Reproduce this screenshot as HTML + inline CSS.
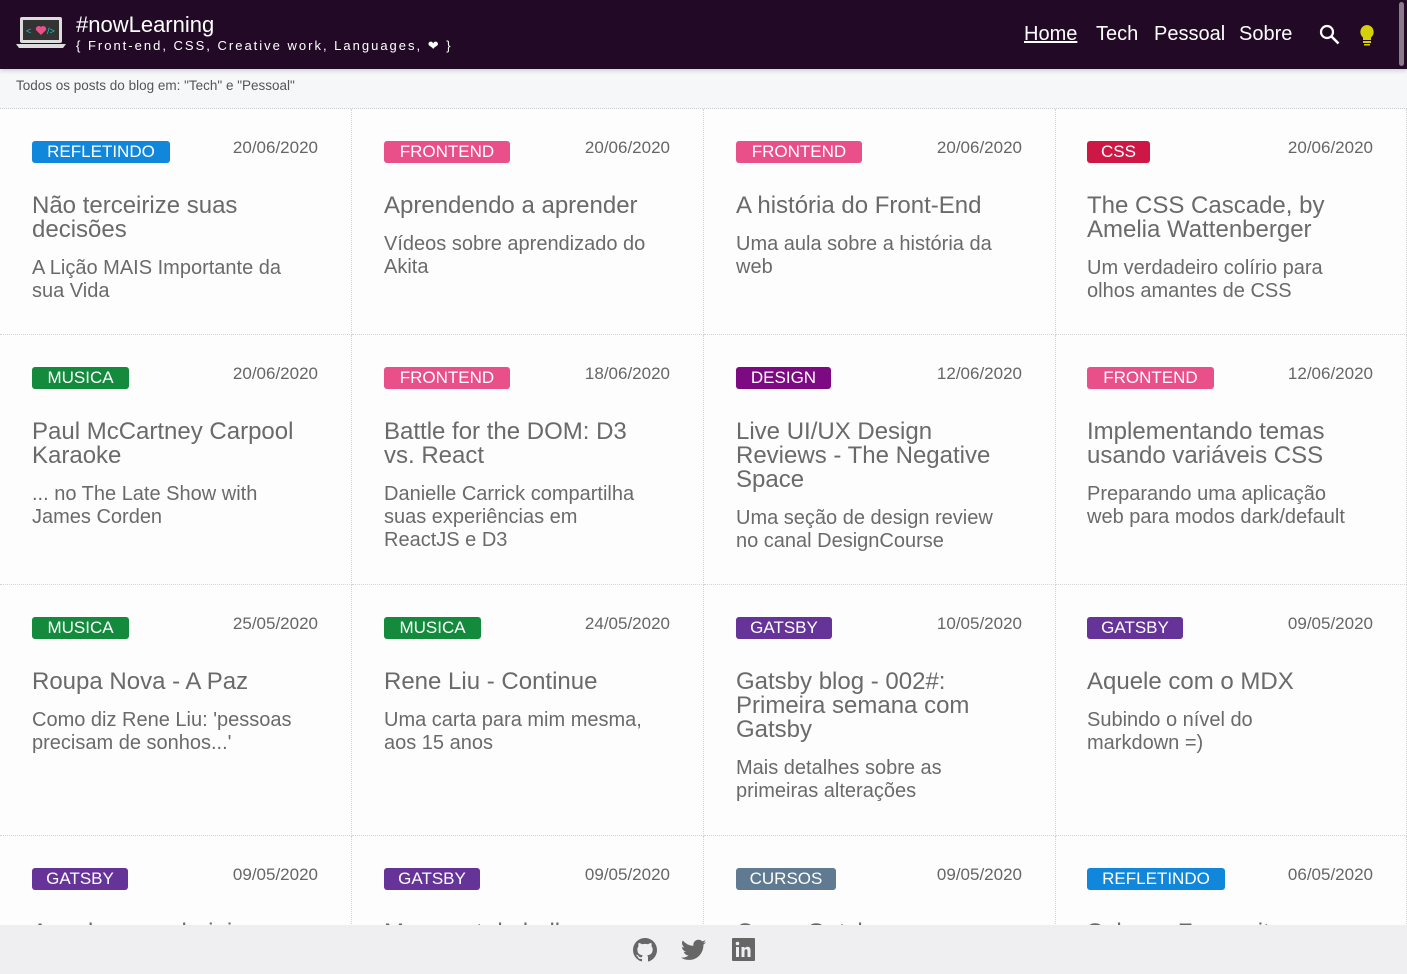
<!DOCTYPE html>
<html><head><meta charset="utf-8"><style>
*{box-sizing:border-box;margin:0;padding:0}
html,body{width:1407px;height:974px;overflow:hidden}
body{background:#fdfdfe;font-family:"Liberation Sans",sans-serif;color:#676767;position:relative}
.hdr{position:absolute;left:0;top:0;width:1407px;height:69px;background:#220a27;color:#fff;box-shadow:0 2px 4px rgba(0,0,0,.15);z-index:3}
.logo{position:absolute;left:16px;top:16px}
.t1{position:absolute;left:76px;top:12px;font-size:22px}
.t2{position:absolute;left:76px;top:38px;font-size:13px;letter-spacing:2px}
.nav{position:absolute;top:23px;font-size:20px}
.sub{position:absolute;left:0;top:69px;width:1407px;height:40px;background:#f6f7f9;border-bottom:1px dotted #ccc;font-size:13.5px;color:#555;padding:9px 16px}
.card{position:absolute;width:352px;border-right:1px dotted #d3d3d3;border-bottom:1px dotted #d3d3d3;padding:0 32px}
.tag{position:absolute;left:32px;top:32px;height:22px;border-radius:3px;color:#fff;font-size:17px;text-align:center;line-height:22px}
.date{position:absolute;right:33px;top:29px;font-size:17px;color:#666}
.ti{position:absolute;left:32px;top:85px;font-size:24px;line-height:24px;color:#6a6a6a;width:310px}
.ti p{margin-bottom:15px}
.ti span{display:block;font-size:20px;line-height:23px}
.ft{position:absolute;left:0;top:925px;width:1407px;height:49px;background:#efeff1;z-index:2}
.sb{position:absolute;left:1398px;top:0;width:9px;height:69px;z-index:4}
</style></head><body>
<div class="hdr">
<svg class="logo" width="50" height="34" viewBox="0 0 50 34"><rect x="4" y="1" width="42" height="26" rx="2" fill="#ddd"/><rect x="7" y="4" width="36" height="20" fill="#333"/><path d="M0 28h50l-3 4H3z" fill="#ddd"/><text x="10" y="18" font-size="9" fill="#2cb" font-family="Liberation Sans">&lt;</text><path d="M25 19l-5-5a3 3 0 0 1 5-3a3 3 0 0 1 5 3z" fill="#e9508a"/><text x="31" y="18" font-size="9" fill="#2cb" font-family="Liberation Sans">/&gt;</text></svg>
<div class="t1">#nowLearning</div>
<div class="t2">{ Front-end, CSS, Creative work, Languages, ❤ }</div>
<div class="nav" style="left:1024px;text-decoration:underline">Home</div>
<div class="nav" style="left:1096px">Tech</div>
<div class="nav" style="left:1154px">Pessoal</div>
<div class="nav" style="left:1239px">Sobre</div>
<svg style="position:absolute;left:1319px;top:24px" width="22" height="22" viewBox="0 0 22 22"><circle cx="8" cy="8" r="6" stroke="#fff" stroke-width="2.2" fill="none"/><path d="M12.5 12.5l7 7" stroke="#fff" stroke-width="2.6"/></svg>
<svg style="position:absolute;left:1358px;top:24px" width="18" height="22" viewBox="0 0 18 22"><path d="M9 1a7 7 0 0 0-4 12.5V16h8v-2.5A7 7 0 0 0 9 1z" fill="#d4d10a"/><rect x="5" y="17" width="8" height="2" fill="#d4d10a"/><rect x="6" y="20" width="6" height="1.5" fill="#d4d10a"/></svg>
</div>
<div class="sb"><div style="position:absolute;left:1px;top:2px;width:5px;height:64px;background:#8a7a8c;border-radius:3px"></div></div>
<div class="sub">Todos os posts do blog em: "Tech" e "Pessoal"</div>

<div class="card" style="left:0;top:109px;height:226px"><div class="tag" style="width:138px;background:#1187dc">REFLETINDO</div><div class="date">20/06/2020</div><div class="ti"><p>Não terceirize suas<br>decisões</p><span>A Lição MAIS Importante da<br>sua Vida</span></div></div>
<div class="card" style="left:352px;top:109px;height:226px"><div class="tag" style="width:126px;background:#e9508a">FRONTEND</div><div class="date">20/06/2020</div><div class="ti"><p>Aprendendo a aprender</p><span>Vídeos sobre aprendizado do<br>Akita</span></div></div>
<div class="card" style="left:704px;top:109px;height:226px"><div class="tag" style="width:126px;background:#e9508a">FRONTEND</div><div class="date">20/06/2020</div><div class="ti"><p>A história do Front-End</p><span>Uma aula sobre a história da<br>web</span></div></div>
<div class="card" style="left:1055px;top:109px;height:226px;width:352px"><div class="tag" style="width:63px;background:#cf1745">CSS</div><div class="date">20/06/2020</div><div class="ti"><p>The CSS Cascade, by<br>Amelia Wattenberger</p><span>Um verdadeiro colírio para<br>olhos amantes de CSS</span></div></div>

<div class="card" style="left:0;top:335px;height:250px"><div class="tag" style="width:97px;background:#138a3c">MUSICA</div><div class="date">20/06/2020</div><div class="ti"><p>Paul McCartney Carpool<br>Karaoke</p><span>... no The Late Show with<br>James Corden</span></div></div>
<div class="card" style="left:352px;top:335px;height:250px"><div class="tag" style="width:126px;background:#e9508a">FRONTEND</div><div class="date">18/06/2020</div><div class="ti"><p>Battle for the DOM: D3<br>vs. React</p><span>Danielle Carrick compartilha<br>suas experiências em<br>ReactJS e D3</span></div></div>
<div class="card" style="left:704px;top:335px;height:250px"><div class="tag" style="width:95px;background:#7d0a82">DESIGN</div><div class="date">12/06/2020</div><div class="ti"><p>Live UI/UX Design<br>Reviews - The Negative<br>Space</p><span>Uma seção de design review<br>no canal DesignCourse</span></div></div>
<div class="card" style="left:1055px;top:335px;height:250px"><div class="tag" style="width:127px;background:#e9508a">FRONTEND</div><div class="date">12/06/2020</div><div class="ti"><p>Implementando temas<br>usando variáveis CSS</p><span>Preparando uma aplicação<br>web para modos dark/default</span></div></div>

<div class="card" style="left:0;top:585px;height:251px"><div class="tag" style="width:97px;background:#138a3c">MUSICA</div><div class="date">25/05/2020</div><div class="ti"><p>Roupa Nova - A Paz</p><span>Como diz Rene Liu: 'pessoas<br>precisam de sonhos...'</span></div></div>
<div class="card" style="left:352px;top:585px;height:251px"><div class="tag" style="width:97px;background:#138a3c">MUSICA</div><div class="date">24/05/2020</div><div class="ti"><p>Rene Liu - Continue</p><span>Uma carta para mim mesma,<br>aos 15 anos</span></div></div>
<div class="card" style="left:704px;top:585px;height:251px"><div class="tag" style="width:96px;background:#663399">GATSBY</div><div class="date">10/05/2020</div><div class="ti"><p>Gatsby blog - 002#:<br>Primeira semana com<br>Gatsby</p><span>Mais detalhes sobre as<br>primeiras alterações</span></div></div>
<div class="card" style="left:1055px;top:585px;height:251px"><div class="tag" style="width:96px;background:#663399">GATSBY</div><div class="date">09/05/2020</div><div class="ti"><p>Aquele com o MDX</p><span>Subindo o nível do<br>markdown =)</span></div></div>

<div class="card" style="left:0;top:836px;height:138px"><div class="tag" style="width:96px;background:#663399">GATSBY</div><div class="date">09/05/2020</div><div class="ti"><p>Aquele que adoriei</p></div></div>
<div class="card" style="left:352px;top:836px;height:138px"><div class="tag" style="width:96px;background:#663399">GATSBY</div><div class="date">09/05/2020</div><div class="ti"><p>Meu post de hello</p></div></div>
<div class="card" style="left:704px;top:836px;height:138px"><div class="tag" style="width:100px;background:#5f7a91">CURSOS</div><div class="date">09/05/2020</div><div class="ti"><p>Curso Gatsby</p></div></div>
<div class="card" style="left:1055px;top:836px;height:138px"><div class="tag" style="width:138px;background:#1187dc">REFLETINDO</div><div class="date">06/05/2020</div><div class="ti"><p>Sobre o Foco e ituo</p></div></div>

<div class="ft">
<svg style="position:absolute;left:633px;top:13px" width="24" height="24" viewBox="0 0 16 16"><path fill="#666" d="M8 0C3.58 0 0 3.58 0 8c0 3.54 2.29 6.53 5.47 7.59.4.07.55-.17.55-.38v-1.33c-2.23.48-2.7-1.07-2.7-1.07-.36-.92-.89-1.17-.89-1.17-.73-.5.05-.49.05-.49.8.06 1.23.83 1.23.83.71 1.22 1.87.87 2.33.66.07-.52.28-.87.51-1.07-1.78-.2-3.64-.89-3.64-3.95 0-.87.31-1.59.82-2.15-.08-.2-.36-1.02.08-2.12 0 0 .67-.21 2.2.82a7.6 7.6 0 0 1 4 0c1.53-1.04 2.2-.82 2.2-.82.44 1.1.16 1.92.08 2.12.51.56.82 1.27.82 2.15 0 3.07-1.87 3.75-3.65 3.95.29.25.54.73.54 1.48v2.2c0 .21.15.46.55.38A8 8 0 0 0 16 8c0-4.42-3.58-8-8-8z"/></svg>
<svg style="position:absolute;left:681px;top:14px" width="25" height="22" viewBox="0 0 24 20"><path fill="#666" d="M24 2.4c-.9.4-1.8.7-2.8.8 1-.6 1.8-1.6 2.2-2.7-1 .6-2 1-3.1 1.2A4.9 4.9 0 0 0 11.9 6 14 14 0 0 1 1.7.9a4.9 4.9 0 0 0 1.5 6.6c-.8 0-1.6-.2-2.2-.6 0 2.4 1.7 4.4 3.9 4.8-.7.2-1.5.2-2.2.1.6 2 2.4 3.4 4.6 3.4A9.9 9.9 0 0 1 0 17.3 14 14 0 0 0 7.5 19.5c9.1 0 14-7.5 14-14v-.6c1-.7 1.8-1.6 2.5-2.5z"/></svg>
<svg style="position:absolute;left:732px;top:13px" width="23" height="23" viewBox="0 0 23 23"><rect width="23" height="23" rx="1" fill="#666"/><rect x="4" y="9" width="3" height="10" fill="#efeff1"/><circle cx="5.5" cy="5.5" r="1.8" fill="#efeff1"/><path d="M9.5 9h3v1.5c.6-1 1.7-1.7 3-1.7 2.3 0 3 1.4 3 3.7V19h-3v-5.8c0-1.2-.3-2-1.4-2s-1.6.8-1.6 2V19h-3z" fill="#efeff1"/></svg>
</div>
</body></html>
